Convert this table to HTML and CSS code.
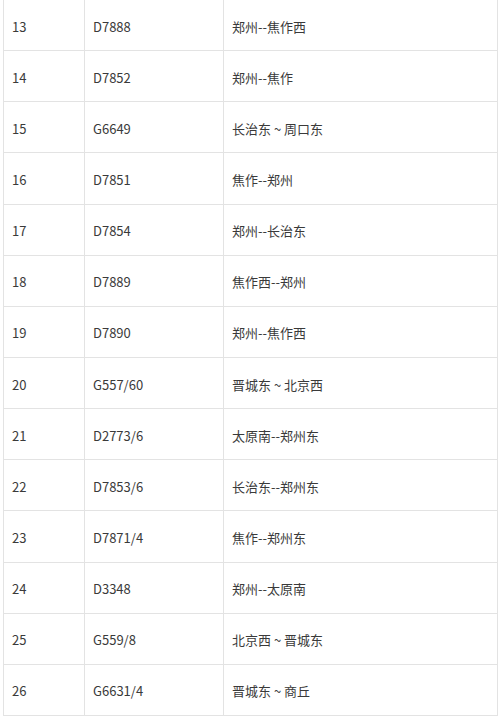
FILE: index.html
```html
<!DOCTYPE html>
<html lang="zh">
<head>
<meta charset="utf-8">
<link rel="stylesheet" href="styles.css">
</head>
<body>
<table class="trains">
<colgroup><col class="c1"><col class="c2"><col class="c3"></colgroup>
<tbody>
<tr><td>13</td><td>D7888</td><td>郑州--焦作西</td></tr>
<tr><td>14</td><td>D7852</td><td>郑州--焦作</td></tr>
<tr><td>15</td><td>G6649</td><td>长治东 ~ 周口东</td></tr>
<tr><td>16</td><td>D7851</td><td>焦作--郑州</td></tr>
<tr><td>17</td><td>D7854</td><td>郑州--长治东</td></tr>
<tr><td>18</td><td>D7889</td><td>焦作西--郑州</td></tr>
<tr><td>19</td><td>D7890</td><td>郑州--焦作西</td></tr>
<tr><td>20</td><td>G557/60</td><td>晋城东 ~ 北京西</td></tr>
<tr><td>21</td><td>D2773/6</td><td>太原南--郑州东</td></tr>
<tr><td>22</td><td>D7853/6</td><td>长治东--郑州东</td></tr>
<tr><td>23</td><td>D7871/4</td><td>焦作--郑州东</td></tr>
<tr><td>24</td><td>D3348</td><td>郑州--太原南</td></tr>
<tr><td>25</td><td>G559/8</td><td>北京西 ~ 晋城东</td></tr>
<tr><td>26</td><td>G6631/4</td><td>晋城东 ~ 商丘</td></tr>
</tbody>
</table>
</body>
</html>
```
FILE: styles.css
```css
html, body {
  margin: 0;
  padding: 0;
  background: #ffffff;
}
body {
  font-family: "Noto Sans CJK SC", "Noto Sans", sans-serif;
  font-size: 13px;
  color: #3a3a3a;
}
.trains {
  border-collapse: collapse;
  table-layout: fixed;
  width: 494px;
  margin: -1px 0 0 3px;
}
.c1 { width: 81px; }
.c2 { width: 139px; }
.c3 { width: 274px; }
.trains tr {
  height: 51.15px;
}
.trains td {
  border: 1px solid #e3e3e3;
  padding: 3px 8px 0;
  vertical-align: middle;
  line-height: 20px;
  white-space: nowrap;
}
```
